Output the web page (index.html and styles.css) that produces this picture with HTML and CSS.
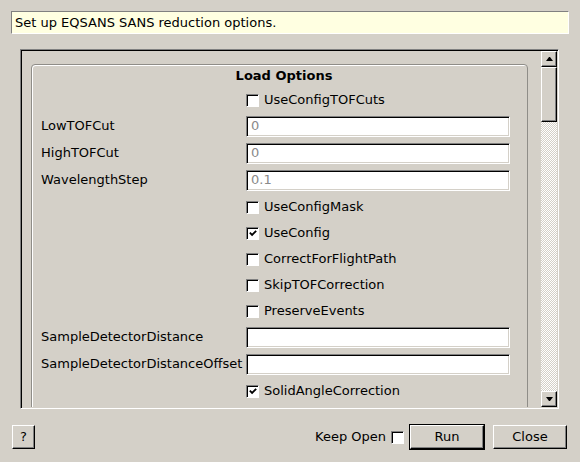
FILE: index.html
```html
<!DOCTYPE html>
<html>
<head>
<meta charset="utf-8">
<link rel="stylesheet" href="styles.css">
</head>
<body>
<div class="window">
  <div class="desc">Set up EQSANS SANS reduction options.</div>
  <div class="scrollarea">
    <div class="viewport">
      <div class="group">
        <div class="title">Load Options</div>
        <div class="form">
          <div></div><div class="check"><span class="box"></span>UseConfigTOFCuts</div>
          <div class="lbl">LowTOFCut</div><div class="input disabled">0</div>
          <div class="lbl">HighTOFCut</div><div class="input disabled">0</div>
          <div class="lbl">WavelengthStep</div><div class="input disabled">0.1</div>
          <div></div><div class="check"><span class="box"></span>UseConfigMask</div>
          <div></div><div class="check"><span class="box checked"><svg width="11" height="11" viewBox="0 0 11 11"><path d="M2 4.5 L4.5 7 L9 2.5" fill="none" stroke="#000" stroke-width="2"/></svg></span>UseConfig</div>
          <div></div><div class="check"><span class="box"></span>CorrectForFlightPath</div>
          <div></div><div class="check"><span class="box"></span>SkipTOFCorrection</div>
          <div></div><div class="check"><span class="box"></span>PreserveEvents</div>
          <div class="lbl">SampleDetectorDistance</div><div class="input"></div>
          <div class="lbl">SampleDetectorDistanceOffset</div><div class="input"></div>
          <div></div><div class="check"><span class="box checked"><svg width="11" height="11" viewBox="0 0 11 11"><path d="M2 4.5 L4.5 7 L9 2.5" fill="none" stroke="#000" stroke-width="2"/></svg></span>SolidAngleCorrection</div>
          <div></div><div class="check"><span class="box"></span>UseConfigBeam</div>
          <div></div><div class="check"><span class="box"></span>UseHighResolutionBinning</div>
        </div>
      </div>
    </div>
    <div class="scrollbar">
      <div class="sbtn"><span class="arrow-up"></span></div>
      <div class="thumb"></div>
      <div class="track"></div>
      <div class="sbtn"><span class="arrow-down"></span></div>
    </div>
  </div>
  <div class="buttons">
    <button class="btn help">?</button>
    <div class="spacer"></div>
    <div class="keep"><span class="keeptext">Keep Open</span><span class="box keepbox"></span></div>
    <button class="btn run">Run</button>
    <button class="btn close">Close</button>
  </div>
</div>
</body>
</html>
```
FILE: styles.css
```css
html, body {
  margin: 0;
  padding: 0;
  background: #d4d0c8;
}
body {
  font-family: "DejaVu Sans", "Liberation Sans", sans-serif;
  font-size: 13px;
  color: #000;
}
.window {
  width: 580px;
  height: 462px;
  display: flex;
  flex-direction: column;
  overflow: hidden;
}
.desc {
  margin: 11px 11px 0 11px;
  height: 23px;
  box-sizing: border-box;
  background: #ffffe1;
  border: 1px solid;
  border-color: #808080 #fff #fff #808080;
  padding-left: 3px;
  line-height: 21px;
}
.scrollarea {
  margin: 15px 21px 0 20px;
  height: 360px;
  box-sizing: border-box;
  border: 1px solid;
  border-color: #808080 #fff #fff #808080;
  box-shadow: inset 1px 1px 0 #000, inset -1px -1px 0 #d4d0c8;
  padding: 1px;
  display: flex;
}
.viewport {
  flex: 1;
  overflow: hidden;
}
.group {
  margin: 13px 13px 0 9px;
  border: 1px solid #8f8d88;
  border-radius: 4px;
  box-shadow: inset 1px 1px 0 #fff;
  padding: 3px 0 20px 9px;
}
.title {
  font-weight: bold;
  text-align: center;
  line-height: 16px;
  margin-bottom: 6px;
}
.form {
  display: grid;
  grid-template-columns: 205px 264px;
  row-gap: 6px;
}
.lbl {
  height: 21px;
  line-height: 19px;
  white-space: nowrap;
}
.check {
  height: 20px;
  display: flex;
  align-items: center;
  white-space: nowrap;
  line-height: 18px;
}
.box {
  width: 13px;
  height: 13px;
  box-sizing: border-box;
  background: #fff;
  border: 1px solid;
  border-color: #808080 #fff #fff #808080;
  box-shadow: inset 1px 1px 0 #000;
  margin-right: 5px;
  display: inline-flex;
  align-items: center;
  justify-content: center;
  flex: none;
}
.box svg {
  display: block;
  margin: 1px 0 0 1px;
}
.input {
  height: 21px;
  box-sizing: border-box;
  background: #fff;
  border: 1px solid;
  border-color: #808080 #fff #fff #808080;
  box-shadow: inset 1px 1px 0 #000, inset -1px -1px 0 #d4d0c8;
  padding-left: 4px;
  line-height: 18px;
}
.input.disabled {
  color: #8a8a8a;
}
.scrollbar {
  width: 16px;
  display: flex;
  flex-direction: column;
}
.sbtn, .thumb, .btn {
  background: #d4d0c8;
  box-sizing: border-box;
  border: 1px solid;
  border-color: #fff #000 #000 #fff;
  box-shadow: inset -1px -1px 0 #808080;
}
.sbtn {
  height: 16px;
  display: flex;
  align-items: center;
  justify-content: center;
}
.thumb {
  height: 55px;
}
.track {
  flex: 1;
  background-color: #d4d0c8;
  background-image: repeating-conic-gradient(#fff 0 25%, #d4d0c8 0 50%);
  background-size: 2px 2px;
}
.arrow-up {
  width: 1px;
  height: 0;
  border-left: 3px solid transparent;
  border-right: 3px solid transparent;
  border-bottom: 4px solid #000;
}
.arrow-down {
  width: 1px;
  height: 0;
  border-left: 3px solid transparent;
  border-right: 3px solid transparent;
  border-top: 4px solid #000;
}
.buttons {
  margin-top: 15px;
  height: 26px;
  display: flex;
  align-items: center;
  padding: 0 13px 0 12px;
}
.btn {
  font-family: "DejaVu Sans", "Liberation Sans", sans-serif;
  font-size: 13px;
  line-height: 16px;
  color: #000;
  height: 24px;
  padding: 0;
}
.help {
  width: 23px;
}
.spacer {
  flex: 1;
}
.keep {
  display: flex;
  align-items: center;
  height: 20px;
  margin-right: 6px;
}
.keeptext {
  margin-right: 5px;
  line-height: 18px;
  white-space: nowrap;
}
.keepbox {
  margin-right: 0;
}
.run {
  width: 74px;
  outline: 1px solid #000;
  margin-right: 9px;
}
.close {
  width: 74px;
}
```
